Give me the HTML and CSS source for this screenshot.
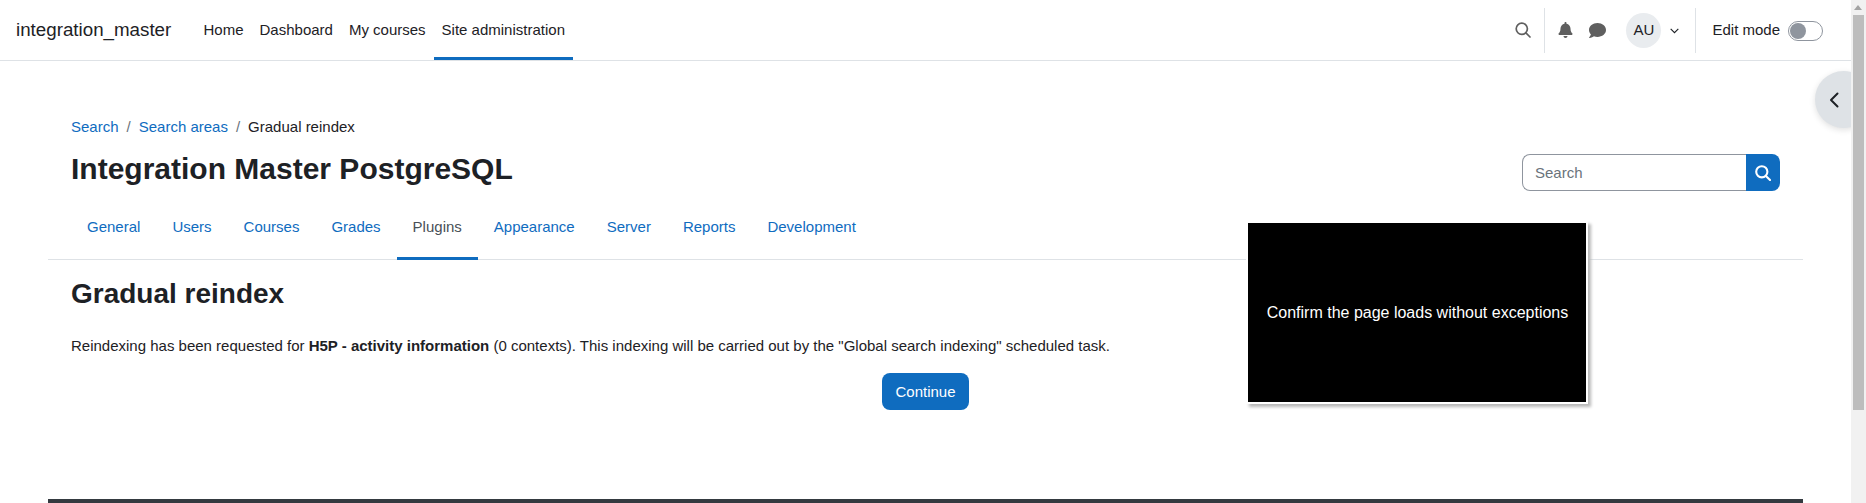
FILE: index.html
```html
<!DOCTYPE html>
<html lang="en">
<head>
<meta charset="utf-8">
<title>Gradual reindex</title>
<link rel="stylesheet" href="styles.css">
</head>
<body>
<div class="page">
  <header class="navbar">
    <a class="brand" href="#">integration_master</a>
    <nav class="primary">
      <a href="#">Home</a>
      <a href="#">Dashboard</a>
      <a href="#">My courses</a>
      <a class="active" href="#">Site administration</a>
    </nav>
    <div class="usernav">
      <svg class="ic-search" viewBox="0 0 16 16"><circle cx="6.8" cy="6.8" r="5.6"/><line x1="10.9" y1="10.9" x2="15" y2="15"/></svg>
      <span class="divider div-a"></span>
      <svg class="ic-bell" viewBox="0 0 448 512"><path d="M224 512c35.32 0 63.97-28.65 63.97-64H160.03c0 35.35 28.65 64 63.97 64zm215.39-149.71c-19.32-20.76-55.47-51.99-55.47-154.29 0-77.7-54.48-139.9-127.94-155.16V32c0-17.67-14.32-32-31.98-32s-31.98 14.33-31.98 32v20.84C118.56 68.1 64.08 130.3 64.08 208c0 102.3-36.15 133.53-55.47 154.29-6 6.45-8.66 14.16-8.61 21.71.11 16.4 12.98 32 32.1 32h383.8c19.12 0 32-15.6 32.1-32 .05-7.55-2.61-15.27-8.61-21.71z"/></svg>
      <svg class="ic-chat" viewBox="0 0 512 512"><path d="M256 32C114.6 32 0 125.1 0 240c0 49.6 21.4 95 57 130.7C44.5 421.1 2.7 466 2.2 466.5c-2.2 2.3-2.8 5.7-1.5 8.7S4.8 480 8 480c66.3 0 116-31.8 140.6-51.4 32.7 12.3 69 19.4 107.4 19.4 141.4 0 256-93.1 256-208S397.4 32 256 32z"/></svg>
      <span class="avatar">AU</span>
      <svg class="ic-caret" viewBox="0 0 8 5"><path d="M0.6 0.6 L4 4 L7.4 0.6"/></svg>
      <span class="divider div-b"></span>
      <span class="editlabel">Edit mode</span>
      <span class="toggle"><span class="knob"></span></span>
    </div>
  </header>

  <main class="content">
    <div class="pagehead">
      <div class="headtext">
        <ol class="crumbs">
          <li><a href="#">Search</a></li>
          <li class="sep">/</li>
          <li><a href="#">Search areas</a></li>
          <li class="sep">/</li>
          <li>Gradual reindex</li>
        </ol>
        <h1>Integration Master PostgreSQL</h1>
      </div>
      <form class="searchbox">
        <input type="text" placeholder="Search">
        <button type="button" aria-label="Search"><svg viewBox="0 0 16 16"><circle cx="6.8" cy="6.8" r="5.6"/><line x1="10.9" y1="10.9" x2="15" y2="15"/></svg></button>
      </form>
    </div>
    <nav class="tabs">
      <a href="#">General</a>
      <a href="#">Users</a>
      <a href="#">Courses</a>
      <a href="#">Grades</a>
      <a class="active" href="#">Plugins</a>
      <a href="#">Appearance</a>
      <a href="#">Server</a>
      <a href="#">Reports</a>
      <a href="#">Development</a>
    </nav>
    <section class="region">
      <h2>Gradual reindex</h2>
      <p>Reindexing has been requested for <strong>H5P - activity information</strong> (0 contexts). This indexing will be carried out by the "Global search indexing" scheduled task.</p>
      <div class="actions"><button type="button" class="btn">Continue</button></div>
    </section>
    <footer class="footerbar"></footer>
  </main>

  <button type="button" class="drawer" aria-label="Open drawer"><svg viewBox="0 0 10 16"><path d="M8.5 1.5 L2 8 L8.5 14.5"/></svg></button>
  <div class="overlay">Confirm the page loads without exceptions</div>
</div>
<div class="scrollbar"><span class="arrow"></span><span class="thumb"></span></div>
</body>
</html>
```
FILE: styles.css
```css
* { box-sizing: border-box; }
html, body { margin: 0; padding: 0; height: 503px; overflow: hidden; background: #fff; }
body {
  font-family: "Liberation Sans", Arial, sans-serif;
  font-size: 15px;
  line-height: 22.5px;
  color: #1d2125;
}
a { color: inherit; text-decoration: none; }

.page { position: relative; width: 1851px; height: 503px; overflow: hidden; }

.navbar {
  display: flex;
  align-items: stretch;
  height: 61px;
  padding-left: 16px;
  border-bottom: 1px solid #dee2e6;
}
.brand { align-self: center; font-size: 18.75px; margin-right: 16px; width: 163.5px; white-space: nowrap; }
.primary { display: flex; }
.primary a {
  display: flex;
  align-items: center;
  padding: 3px 8px 0;
  border-bottom: 3px solid transparent;
  height: 60px;
}
.primary a.active { border-bottom-color: #0f6cbf; }

.usernav { margin-left: auto; display: flex; align-items: center; padding-right: 28px; }
.ic-search { width: 16px; height: 16px; fill: none; stroke: #5f5f5f; stroke-width: 1.7; stroke-linecap: round; margin-right: 13px; }
.divider { width: 1px; height: 45px; background: #dee2e6; }
.ic-bell { width: 15px; height: 16px; fill: #5f5f5f; margin-left: 13px; }
.ic-chat { width: 17px; height: 17px; fill: #5f5f5f; margin-left: 16px; }
.avatar {
  display: flex;
  align-items: center;
  justify-content: center;
  width: 35px;
  height: 35px;
  margin-left: 20px;
  border-radius: 50%;
  background: #e9ecef;
}
.ic-caret { width: 9px; height: 6px; fill: none; stroke: #1d2125; stroke-width: 1; margin-left: 9px; margin-top: 2px; }
.div-b { margin-left: 16px; }
.editlabel { margin-left: 16px; white-space: nowrap; }
.toggle {
  display: block;
  width: 35px;
  height: 20px;
  margin-left: 8px;
  margin-top: 2px;
  padding: 2px;
  border: 1px solid #8f959e;
  border-radius: 10px;
  background: #fff;
}
.knob { display: block; width: 16px; height: 16px; margin-left: -1px; margin-top: -1px; border-radius: 50%; background: #8f959e; }

.content { padding: 0 48px; }
.pagehead { display: flex; justify-content: space-between; padding: 55px 23px 0; height: 139px; }
.crumbs { display: flex; margin: 0; padding: 0; list-style: none; }
.crumbs a { color: #0f6cbf; }
.crumbs .sep { padding: 0 8px; color: #6a737b; }
h1 { margin: 12px 0 0; font-size: 30px; line-height: 36px; font-weight: 700; }
.searchbox { display: flex; margin-top: 38px; height: 37px; }
.searchbox input {
  width: 224px;
  height: 37px;
  padding: 0 12px;
  border: 1px solid #8f959e;
  border-right: 0;
  border-radius: 8px 0 0 8px;
  font: 15px "Liberation Sans", Arial, sans-serif;
  color: #1d2125;
  outline: 0;
}
.searchbox input::placeholder { color: #6a737b; opacity: 1; }
.searchbox button {
  display: flex;
  align-items: center;
  justify-content: center;
  width: 34px;
  height: 37px;
  padding: 0;
  border: 0;
  border-radius: 0 8px 8px 0;
  background: #0f6cbf;
}
.searchbox svg { width: 16px; height: 16px; fill: none; stroke: #fff; stroke-width: 2.1; stroke-linecap: round; }

.tabs {
  display: flex;
  height: 60px;
  padding-left: 23px;
  border-bottom: 1px solid #dee2e6;
}
.tabs a {
  display: flex;
  align-items: center;
  height: 60px;
  padding: 0 16px 2px;
  color: #0f6cbf;
  border-bottom: 3px solid transparent;
}
.tabs a.active { color: #495057; border-bottom-color: #0f6cbf; }

.region { padding: 0 23px; height: 239px; }
h2 { margin: 0; padding-top: 17px; font-size: 28px; line-height: 33.6px; font-weight: 700; }
p { margin: 24px 0 0; }
.actions { display: flex; justify-content: center; margin-top: 16px; }
.btn {
  height: 37px;
  padding: 0 13.5px;
  border: 0;
  border-radius: 8px;
  background: #0f6cbf;
  color: #fff;
  font: 15px "Liberation Sans", Arial, sans-serif;
}
.footerbar { height: 60px; background: #343a40; }

.drawer {
  position: absolute;
  top: 71px;
  left: 1815px;
  width: 57px;
  height: 57px;
  padding: 0;
  border: 0;
  border-radius: 50%;
  background: #dee2e6;
  box-shadow: 0 2px 6px rgba(0,0,0,.12);
}
.drawer svg {
  position: absolute;
  left: 14px;
  top: 21px;
  width: 10px;
  height: 16px;
  fill: none;
  stroke: #1d2125;
  stroke-width: 2;
  stroke-linecap: round;
  stroke-linejoin: round;
}
.overlay {
  position: absolute;
  left: 1246px;
  top: 221px;
  display: flex;
  align-items: center;
  justify-content: center;
  width: 342px;
  height: 183px;
  padding-left: 1px;
  padding-top: 1px;
  border: 2px solid #fff;
  background: #000;
  color: #fff;
  font: 16px "Liberation Sans", Arial, sans-serif;
  box-shadow: 3px 3px 3px #b8b8b8;
}

.scrollbar {
  position: fixed;
  top: 0;
  right: 0;
  width: 15px;
  height: 503px;
  padding: 15px 2px 0;
  background: #f1f1f1;
}
.arrow {
  position: absolute;
  top: 5px;
  left: 3px;
  width: 0;
  height: 0;
  border-left: 4.5px solid transparent;
  border-right: 4.5px solid transparent;
  border-bottom: 5px solid #a3a3a3;
}
.thumb { display: block; height: 395px; background: #bdbdbd; }
```
